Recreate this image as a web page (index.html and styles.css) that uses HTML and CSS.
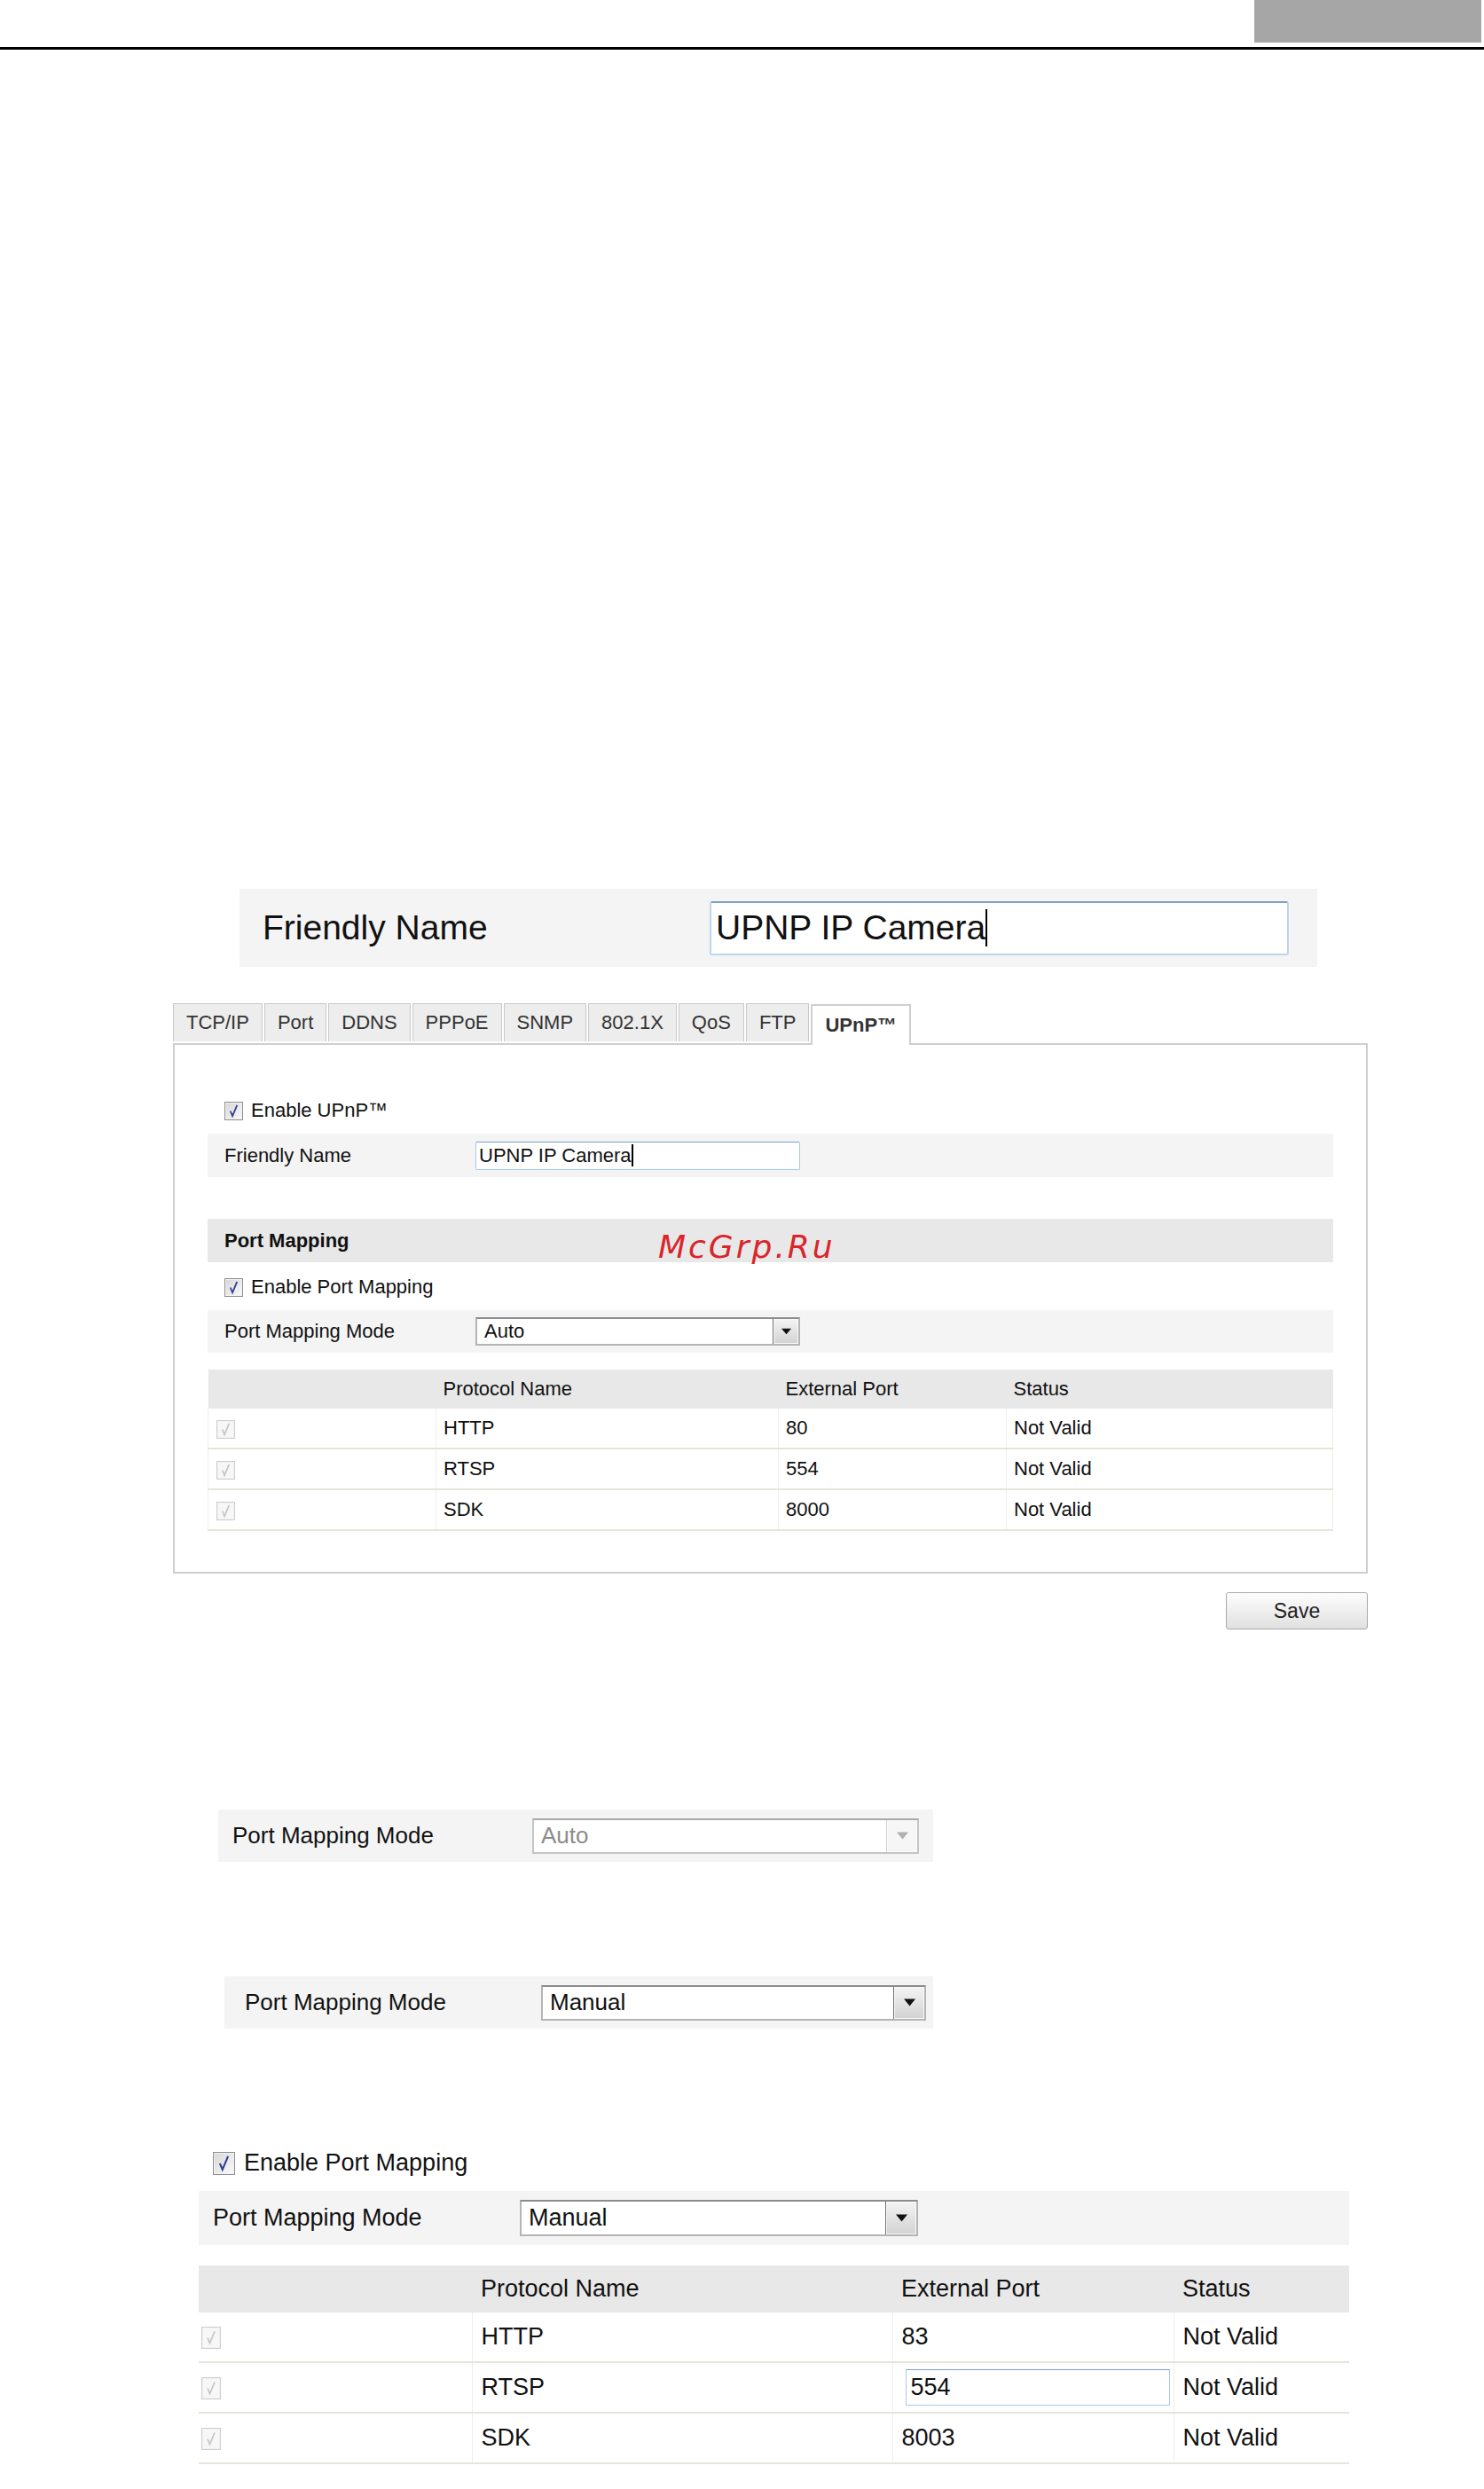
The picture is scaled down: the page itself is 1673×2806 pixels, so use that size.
FILE: index.html
```html
<!DOCTYPE html>
<html lang="en">
<head>
    <meta charset="UTF-8">
    <title>UPnP Settings</title>
    <link rel="stylesheet" href="styles.css">
</head>
<body>
<header class="page-head">
    <div class="head-tab"></div>
</header>

<div class="big-name">
    <span class="big-label">Friendly Name</span>
    <div class="big-input">UPNP IP Camera<span class="caret"></span></div>
</div>

<div class="config">
    <nav class="tabs">
        <a href="#">TCP/IP</a>
        <a href="#">Port</a>
        <a href="#">DDNS</a>
        <a href="#">PPPoE</a>
        <a href="#">SNMP</a>
        <a href="#">802.1X</a>
        <a href="#">QoS</a>
        <a href="#">FTP</a>
        <a href="#" class="active">UPnP™</a>
    </nav>
    <div class="panel">
        <div class="check-row first">
            <span class="cb"><svg viewBox="0 0 20 20"><path d="M6 10 L8.5 16 L14 3"/></svg></span>
            Enable UPnP™
        </div>
        <div class="field-row name-row">
            <span class="label">Friendly Name</span>
            <div class="text-input">UPNP IP Camera<span class="caret"></span></div>
        </div>
        <div class="section-head">
            Port Mapping
            <span class="mark">McGrp.Ru</span>
        </div>
        <div class="check-row second">
            <span class="cb"><svg viewBox="0 0 20 20"><path d="M6 10 L8.5 16 L14 3"/></svg></span>
            Enable Port Mapping
        </div>
        <div class="field-row mode-row">
            <span class="label">Port Mapping Mode</span>
            <div class="select">
                <span class="value">Auto</span>
                <span class="drop"><svg viewBox="0 0 10 6"><polygon points="0,0 10,0 5,6"/></svg></span>
            </div>
        </div>
        <table class="map-table">
            <colgroup>
                <col style="width:257px"><col style="width:386px"><col style="width:257px"><col>
            </colgroup>
            <thead>
            <tr><th></th><th>Protocol Name</th><th>External Port</th><th>Status</th></tr>
            </thead>
            <tbody>
            <tr>
                <td><span class="cb off"><svg viewBox="0 0 20 20"><path d="M6 10 L8.5 16 L14 3"/></svg></span></td>
                <td>HTTP</td><td>80</td><td>Not Valid</td>
            </tr>
            <tr>
                <td><span class="cb off"><svg viewBox="0 0 20 20"><path d="M6 10 L8.5 16 L14 3"/></svg></span></td>
                <td>RTSP</td><td>554</td><td>Not Valid</td>
            </tr>
            <tr>
                <td><span class="cb off"><svg viewBox="0 0 20 20"><path d="M6 10 L8.5 16 L14 3"/></svg></span></td>
                <td>SDK</td><td>8000</td><td>Not Valid</td>
            </tr>
            </tbody>
        </table>
    </div>
    <div class="actions">
        <button class="save">Save</button>
    </div>
</div>

<div class="mode-box auto-box">
    <span class="label">Port Mapping Mode</span>
    <div class="select disabled">
        <span class="value">Auto</span>
        <span class="drop"><svg viewBox="0 0 10 6"><polygon points="0,0 10,0 5,6"/></svg></span>
    </div>
</div>

<div class="mode-box manual-box">
    <span class="label">Port Mapping Mode</span>
    <div class="select">
        <span class="value">Manual</span>
        <span class="drop"><svg viewBox="0 0 10 6"><polygon points="0,0 10,0 5,6"/></svg></span>
    </div>
</div>

<div class="manual-view">
    <div class="check-row big">
        <span class="cb"><svg viewBox="0 0 20 20"><path d="M6 10 L8.5 16 L14 3"/></svg></span>
        Enable Port Mapping
    </div>
    <div class="mode-box wide-box">
        <span class="label">Port Mapping Mode</span>
        <div class="select">
            <span class="value">Manual</span>
            <span class="drop"><svg viewBox="0 0 10 6"><polygon points="0,0 10,0 5,6"/></svg></span>
        </div>
    </div>
    <table class="map-table big-table">
        <colgroup>
            <col style="width:308px"><col style="width:474px"><col style="width:317px"><col>
        </colgroup>
        <thead>
        <tr><th></th><th>Protocol Name</th><th>External Port</th><th>Status</th></tr>
        </thead>
        <tbody>
        <tr>
            <td><span class="cb off"><svg viewBox="0 0 20 20"><path d="M6 10 L8.5 16 L14 3"/></svg></span></td>
            <td>HTTP</td><td>83</td><td>Not Valid</td>
        </tr>
        <tr>
            <td><span class="cb off"><svg viewBox="0 0 20 20"><path d="M6 10 L8.5 16 L14 3"/></svg></span></td>
            <td>RTSP</td><td><div class="port-input">554</div></td><td>Not Valid</td>
        </tr>
        <tr>
            <td><span class="cb off"><svg viewBox="0 0 20 20"><path d="M6 10 L8.5 16 L14 3"/></svg></span></td>
            <td>SDK</td><td>8003</td><td>Not Valid</td>
        </tr>
        </tbody>
    </table>
</div>
</body>
</html>
```

FILE: styles.css
```css
body {
    margin: 0;
    background: #fff;
    font-family: "Liberation Sans", Arial, sans-serif;
    color: #111;
}

/* top of the manual page */
.page-head {
    height: 53px;
    border-bottom: 3px solid #000;
    display: flex;
    justify-content: flex-end;
    padding-right: 3px;
}

.head-tab {
    width: 256px;
    height: 48px;
    background: #a6a6a6;
}

/* enlarged friendly name */
.big-name {
    margin: 946px 0 0 270px;
    width: 1215px;
    height: 88px;
    box-sizing: border-box;
    padding-left: 26px;
    display: flex;
    align-items: center;
    background: #f4f4f4;
}

.big-label {
    width: 504px;
    font-size: 39px;
}

.big-input {
    width: 653px;
    height: 61px;
    box-sizing: border-box;
    padding-left: 5px;
    display: flex;
    align-items: center;
    font-size: 39px;
    background: #fff;
    border: 2px solid #bcd5ee;
    border-top-color: #7f9fc4;
    border-radius: 3px;
}

.caret {
    display: inline-block;
    width: 2px;
    height: 1.1em;
    background: #000;
}

/* settings screenshot */
.config {
    margin: 41px 0 0 195px;
    width: 1347px;
}

.tabs {
    display: flex;
    align-items: flex-end;
    gap: 2px;
}

.tabs > a {
    height: 43px;
    line-height: 41px;
    box-sizing: border-box;
    margin-bottom: 2px;
    padding: 0 14px;
    font-size: 22px;
    color: #333;
    text-decoration: none;
    background: #ededed;
    border: 1px solid #c8c8c8;
    border-bottom: none;
}

.tabs > a.active {
    position: relative;
    z-index: 1;
    height: 46px;
    margin-bottom: -2px;
    line-height: 44px;
    font-weight: bold;
    background: #fff;
    border: 2px solid #cfcfcf;
    border-bottom: none;
}

.panel {
    border: 2px solid #cfcfcf;
    padding: 0 37px 46px;
}

.check-row {
    display: flex;
    align-items: center;
    gap: 9px;
    height: 22px;
    padding-left: 19px;
    font-size: 22px;
}

.check-row.first {
    margin-top: 63px;
}

.check-row.second {
    margin-top: 17px;
}

.cb {
    display: inline-flex;
    width: 21px;
    height: 21px;
    box-sizing: border-box;
    border: 1px solid #8e8e8e;
    background: linear-gradient(135deg, #d6d6d6, #fbfbfb);
    box-shadow: inset 0 0 0 1px #f2f2f2;
}

.cb svg {
    width: 100%;
    height: 100%;
    fill: none;
    stroke: #2d3d8e;
    stroke-width: 1.8;
}

.cb.off {
    border-color: #cdcdcd;
    background: #f7f7f7;
}

.cb.off svg {
    stroke: #c6c6c6;
}

.field-row {
    display: flex;
    align-items: center;
    height: 49px;
    padding-left: 19px;
    margin-top: 15px;
    font-size: 22px;
    background: #f4f4f4;
}

.field-row.mode-row {
    height: 48px;
}

.field-row .label {
    width: 283px;
}

.text-input {
    width: 366px;
    height: 32px;
    box-sizing: border-box;
    padding-left: 3px;
    display: flex;
    align-items: center;
    background: #fff;
    border: 1px solid #a9cbe9;
    border-top-color: #7f9fc4;
    border-radius: 2px;
}

.section-head {
    position: relative;
    height: 49px;
    line-height: 49px;
    margin-top: 47px;
    padding-left: 19px;
    font-size: 22px;
    font-weight: bold;
    background: #e8e8e8;
}

.mark {
    position: absolute;
    left: 508px;
    top: 14px;
    line-height: 1;
    font-family: "DejaVu Sans", sans-serif;
    font-size: 36px;
    font-style: italic;
    font-weight: normal;
    letter-spacing: 3px;
    color: #d9252b;
}

.select {
    width: 366px;
    height: 32px;
    box-sizing: border-box;
    display: flex;
    align-items: stretch;
    background: #fff;
    border: 2px solid #b4b4b4;
    border-top-color: #8c8c8c;
}

.select .value {
    flex: 1;
    display: flex;
    align-items: center;
    padding-left: 8px;
}

.select .drop {
    width: 28px;
    display: flex;
    align-items: center;
    justify-content: center;
    background: linear-gradient(#f4f4f4, #d2d2d2);
    border-left: 1px solid #6f6f6f;
    box-shadow: inset 0 0 0 1px #fafafa;
}

.select .drop svg {
    width: 11px;
    height: 8px;
    fill: #111;
}

.select.disabled {
    color: #8c8c8c;
    border-color: #c4c4c4;
    border-top-color: #a8a8a8;
}

.select.disabled .drop {
    background: #f6f6f6;
    border-left-color: #d0d0d0;
}

.select.disabled .drop svg {
    fill: #b0b0b0;
}

.map-table {
    width: 100%;
    margin-top: 19px;
    border-collapse: collapse;
    table-layout: fixed;
    font-size: 22px;
}

.map-table th {
    height: 44px;
    padding: 0 8px;
    text-align: left;
    font-weight: normal;
    background: #e8e8e8;
}

.map-table td {
    height: 44px;
    padding: 0 8px;
    border-bottom: 2px solid #e5e5dc;
    border-right: 1px solid #eeeeea;
}

.map-table td:first-child {
    padding-left: 9px;
    border-left: 1px solid #eeeeea;
}

.map-table td .cb {
    vertical-align: middle;
}

.actions {
    display: flex;
    justify-content: flex-end;
    margin-top: 21px;
}

.save {
    width: 160px;
    height: 42px;
    font-family: "Liberation Sans", Arial, sans-serif;
    font-size: 23px;
    color: #222;
    background: linear-gradient(#fdfdfd, #e0e0e0);
    border: 1px solid #a9a9a9;
    border-radius: 3px;
}

/* enlarged mode selectors */
.mode-box {
    display: flex;
    align-items: center;
    height: 59px;
    box-sizing: border-box;
    font-size: 26px;
    background: #f4f4f4;
}

.mode-box .select {
    height: 40px;
}

.mode-box .select .drop {
    width: 34px;
}

.mode-box .select .drop svg {
    width: 13px;
    height: 9px;
}

.auto-box {
    margin: 203px 0 0 246px;
    width: 806px;
    padding-left: 16px;
}

.auto-box .label {
    width: 338px;
}

.auto-box .select {
    width: 436px;
}

.manual-box {
    margin: 129px 0 0 253px;
    width: 799px;
    padding-left: 23px;
}

.manual-box .label {
    width: 334px;
}

.manual-box .select {
    width: 434px;
}

/* enlarged manual table */
.manual-view {
    margin: 138px 0 0 224px;
    width: 1297px;
}

.check-row.big {
    height: 27px;
    gap: 10px;
    padding-left: 16px;
    font-size: 27px;
}

.check-row.big .cb {
    width: 25px;
    height: 26px;
}

.wide-box {
    margin-top: 18px;
    height: 61px;
    padding-left: 16px;
    font-size: 27px;
}

.wide-box .label {
    width: 346px;
}

.wide-box .select {
    width: 449px;
    height: 41px;
}

.big-table {
    margin-top: 23px;
    font-size: 27px;
}

.big-table th {
    height: 53px;
    padding: 0 10px;
}

.big-table td {
    height: 55px;
    padding: 0 10px;
    border-left: none;
    border-right: 1px solid #eeeeea;
}

.big-table td:first-child {
    padding-left: 3px;
    border-left: none;
}

.big-table td:last-child {
    border-right: none;
}

.big-table .cb {
    width: 22px;
    height: 25px;
}

.port-input {
    width: 298px;
    height: 41px;
    box-sizing: border-box;
    margin-left: 4px;
    padding-left: 5px;
    display: flex;
    align-items: center;
    background: #fff;
    border: 1px solid #a9cbe9;
    border-top-color: #7f9fc4;
}
```
